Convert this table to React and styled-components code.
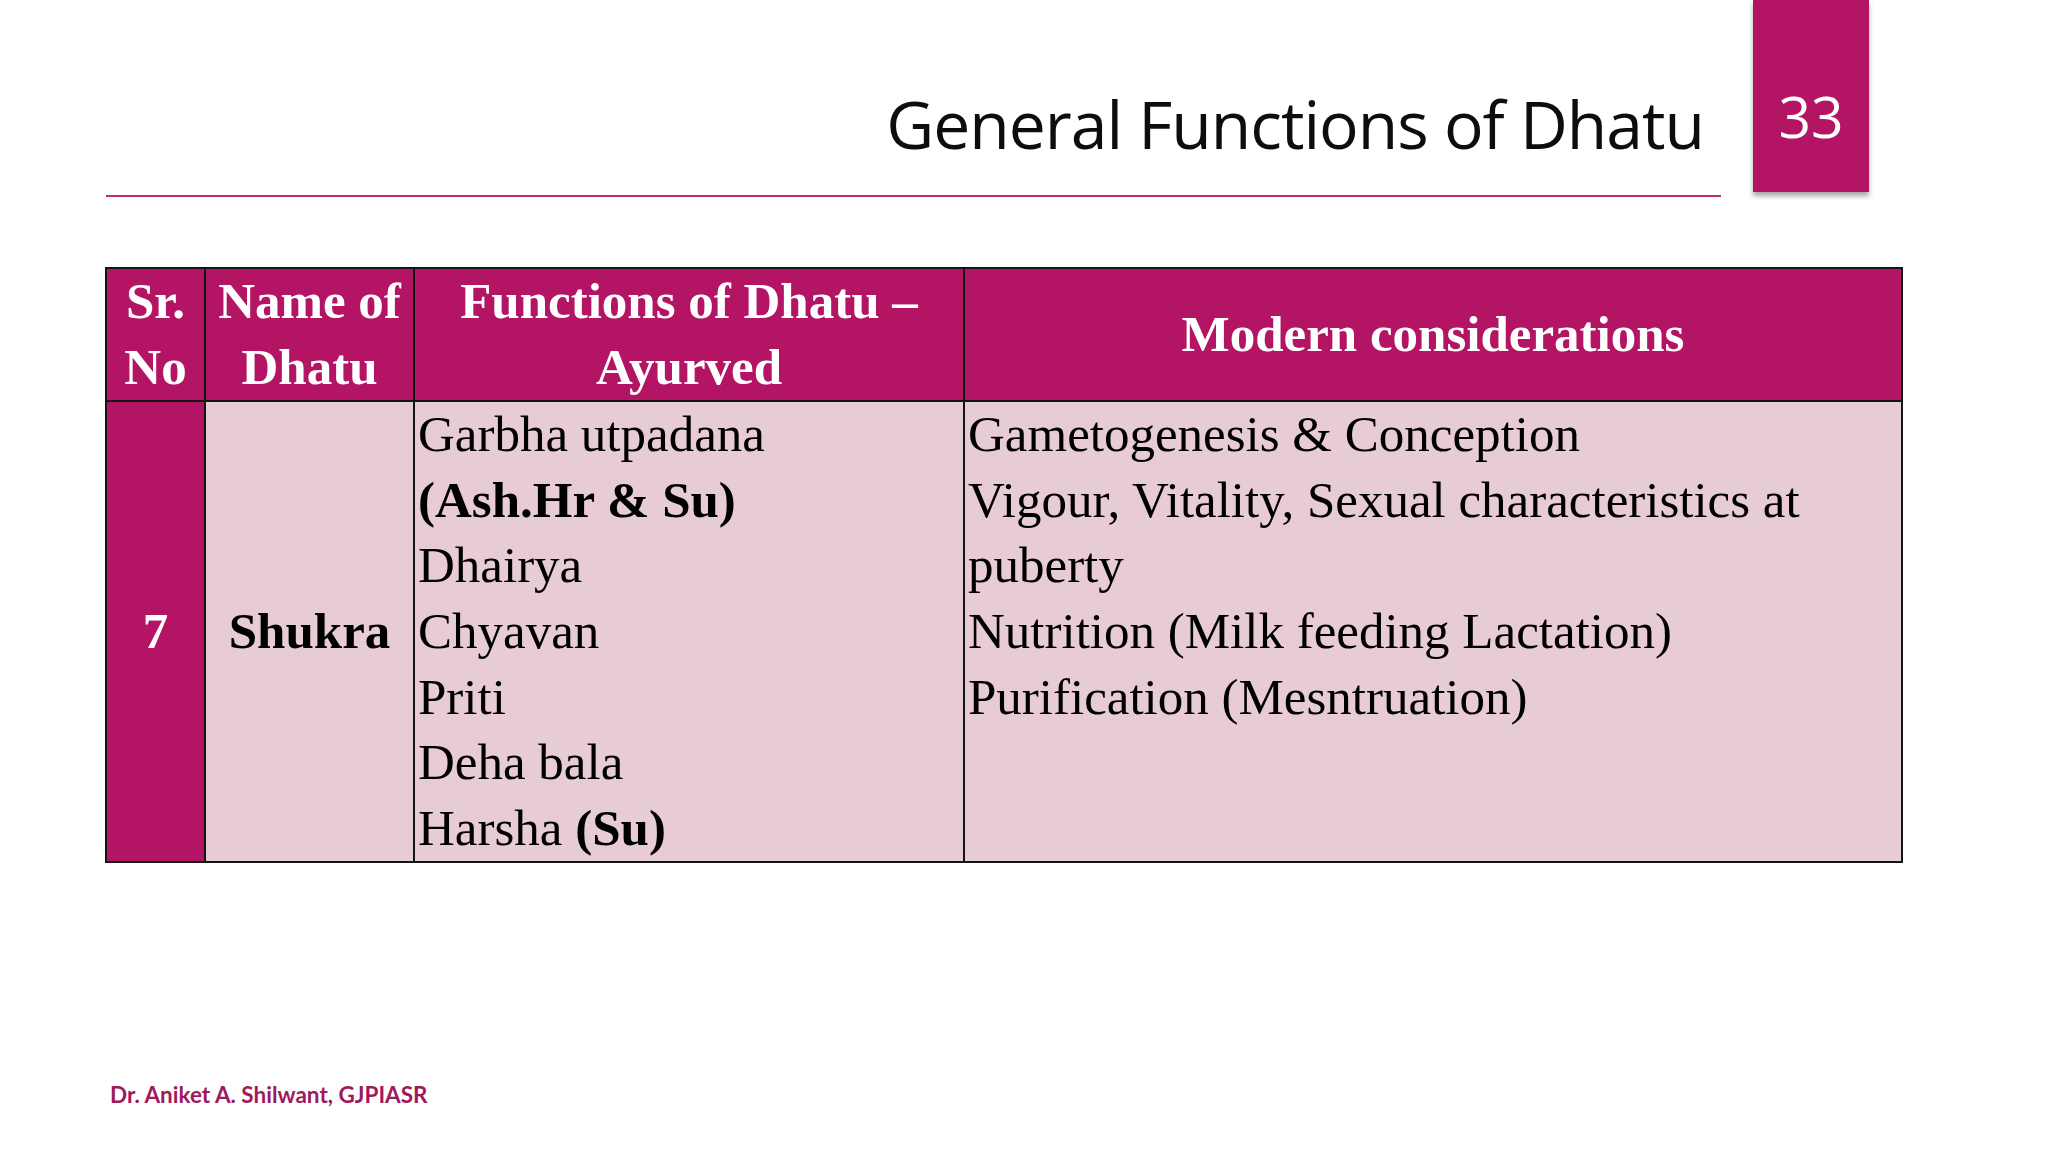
import styled, { createGlobalStyle } from 'styled-components';

const GlobalStyle = createGlobalStyle`
  html, body {
    margin: 0;
    padding: 0;
    background: #ffffff;
  }
`;

const MAGENTA = '#b31463';
const PINK = '#e7cbd5';
const SERIF = `"Liberation Serif", "Times New Roman", serif`;

const functions = [
  { text: 'Garbha utpadana' },
  { bold: '(Ash.Hr & Su)' },
  { text: 'Dhairya' },
  { text: 'Chyavan' },
  { text: 'Priti' },
  { text: 'Deha bala' },
  { text: 'Harsha ', bold: '(Su)' },
];

const modern = [
  'Gametogenesis & Conception',
  'Vigour, Vitality, Sexual characteristics at puberty',
  'Nutrition (Milk feeding Lactation)',
  'Purification (Mesntruation)',
];

const App = () => {
  return (
    <Slide>
      <GlobalStyle />
      <TopBar>
        <TitleArea>
          <Title>General Functions of Dhatu</Title>
        </TitleArea>
        <PageTab>33</PageTab>
      </TopBar>

      <Table>
        <colgroup>
          <col style={{ width: 99 }} />
          <col style={{ width: 209 }} />
          <col style={{ width: 550 }} />
          <col style={{ width: 938 }} />
        </colgroup>
        <thead>
          <tr>
            <HeadCell>Sr.<br />No</HeadCell>
            <HeadCell>Name of<br />Dhatu</HeadCell>
            <HeadCell>Functions of Dhatu –<br />Ayurved</HeadCell>
            <HeadCell>Modern considerations</HeadCell>
          </tr>
        </thead>
        <tbody>
          <tr>
            <NumberCell>7</NumberCell>
            <NameCell>Shukra</NameCell>
            <ListCell>
              {functions.map((f, i) => (
                <Line key={i}>
                  {f.text}
                  {f.bold && <b>{f.bold}</b>}
                </Line>
              ))}
            </ListCell>
            <ListCell>
              {modern.map((m, i) => (
                <Line key={i}>{m}</Line>
              ))}
            </ListCell>
          </tr>
        </tbody>
      </Table>

      <Footer>Dr. Aniket A. Shilwant, GJPIASR</Footer>
    </Slide>
  );
};

const Slide = styled.div`
  width: 2048px;
  height: 1152px;
  display: flex;
  flex-direction: column;
  overflow: hidden;
  background: #ffffff;
`;

const TopBar = styled.div`
  display: flex;
  align-items: flex-start;
  padding-left: 106px;
`;

const TitleArea = styled.div`
  width: 1598px;
  height: 105px;
  padding: 90px 17px 0 0;
  border-bottom: 2px solid #bf2e74;
  text-align: right;
`;

const Title = styled.h1`
  margin: 0;
  font-family: "Open Sans", "Segoe UI", sans-serif;
  font-weight: 400;
  font-size: 66px;
  line-height: 66px;
  letter-spacing: -1px;
  color: #0d0d0d;
`;

const PageTab = styled.div`
  margin-left: 32px;
  width: 116px;
  height: 192px;
  box-sizing: border-box;
  padding-top: 88px;
  background: ${MAGENTA};
  box-shadow: 0 4px 5px rgba(0, 0, 0, 0.35);
  color: #ffffff;
  font-family: "Open Sans", "Segoe UI", sans-serif;
  font-size: 57px;
  line-height: 57px;
  text-align: center;
`;

const Table = styled.table`
  margin: 70px 0 0 105px;
  width: 1796px;
  table-layout: fixed;
  border-collapse: collapse;
  border: 2px solid #141414;
  font-family: ${SERIF};
  font-size: 51px;
  line-height: 65.6px;
`;

const HeadCell = styled.th`
  height: 130px;
  padding: 0;
  border: 2px solid #141414;
  background: ${MAGENTA};
  color: #ffffff;
  font-weight: 700;
  text-align: center;
  vertical-align: middle;
`;

const NumberCell = styled.td`
  height: 458px;
  padding: 0;
  border: 2px solid #141414;
  background: ${MAGENTA};
  color: #ffffff;
  font-weight: 700;
  text-align: center;
  vertical-align: middle;
`;

const NameCell = styled.td`
  padding: 0;
  border: 2px solid #141414;
  background: ${PINK};
  color: #000000;
  font-weight: 700;
  text-align: center;
  vertical-align: middle;
`;

const ListCell = styled.td`
  padding: 0 8px 0 3px;
  border: 2px solid #141414;
  background: ${PINK};
  color: #000000;
  vertical-align: top;
`;

const Line = styled.div`
  b {
    font-weight: 700;
  }
`;

const Footer = styled.div`
  margin-top: auto;
  padding: 0 0 46px 110px;
  font-family: Lato, "Open Sans", sans-serif;
  font-weight: 700;
  font-size: 22.5px;
  line-height: 22.5px;
  color: #a0195d;
`;

export default App;
